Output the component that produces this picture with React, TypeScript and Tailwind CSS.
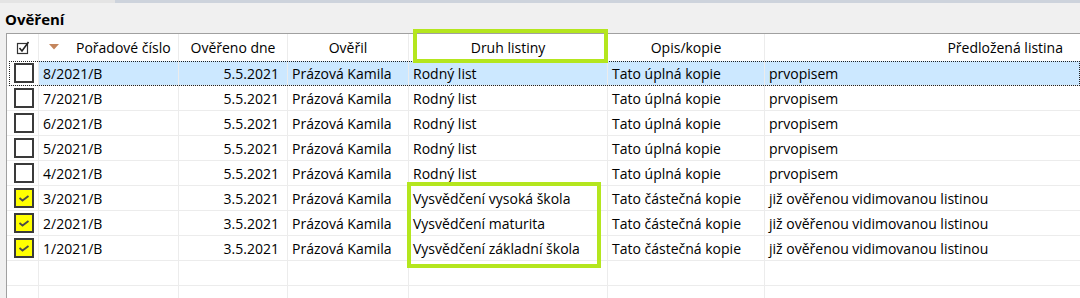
const rows = [
  { num: '8/2021/B', date: '5.5.2021', who: 'Prázová Kamila', kind: 'Rodný list', copy: 'Tato úplná kopie', doc: 'prvopisem', checked: false, selected: true },
  { num: '7/2021/B', date: '5.5.2021', who: 'Prázová Kamila', kind: 'Rodný list', copy: 'Tato úplná kopie', doc: 'prvopisem', checked: false },
  { num: '6/2021/B', date: '5.5.2021', who: 'Prázová Kamila', kind: 'Rodný list', copy: 'Tato úplná kopie', doc: 'prvopisem', checked: false },
  { num: '5/2021/B', date: '5.5.2021', who: 'Prázová Kamila', kind: 'Rodný list', copy: 'Tato úplná kopie', doc: 'prvopisem', checked: false },
  { num: '4/2021/B', date: '5.5.2021', who: 'Prázová Kamila', kind: 'Rodný list', copy: 'Tato úplná kopie', doc: 'prvopisem', checked: false },
  { num: '3/2021/B', date: '3.5.2021', who: 'Prázová Kamila', kind: 'Vysvědčení vysoká škola', copy: 'Tato částečná kopie', doc: 'již ověřenou vidimovanou listinou', checked: true },
  { num: '2/2021/B', date: '3.5.2021', who: 'Prázová Kamila', kind: 'Vysvědčení maturita', copy: 'Tato částečná kopie', doc: 'již ověřenou vidimovanou listinou', checked: true },
  { num: '1/2021/B', date: '3.5.2021', who: 'Prázová Kamila', kind: 'Vysvědčení základní škola', copy: 'Tato částečná kopie', doc: 'již ověřenou vidimovanou listinou', checked: true },
];

const cols = 'grid grid-cols-[32px_140px_109px_121px_199px_157px_1fr]';
const cell = 'border-r border-[#ececec] overflow-hidden whitespace-nowrap';

const Check = ({ checked }: { checked: boolean }) => (
  <div
    className={`flex h-[20px] w-[20px] items-center justify-center border-2 border-[#3a3a3a] ${
      checked ? 'bg-[#ffff00]' : 'bg-white'
    }`}
  >
    {checked && (
      <svg width="12" height="10" viewBox="0 0 12 10">
        <polyline points="1.5,5 4.5,7.5 10.5,3" fill="none" stroke="#4a4a4a" strokeWidth="1.8" />
      </svg>
    )}
  </div>
);

export default function App() {
  return (
    <div
      className="relative h-[298px] w-[1080px] overflow-hidden bg-[#f0f0f0] text-[14px] text-black"
      style={{ fontFamily: '"Open Sans", "Noto Sans", sans-serif' }}
    >
      <div className="flex h-[3px]">
        <div className="w-[115px] bg-[#e4e4e4]" />
        <div className="flex-1 bg-[#cdd3dc]" />
      </div>
      <div className="flex h-[30px] items-center pl-[5px] pt-[3px] text-[15px] font-bold">Ověření</div>

      <div className="ml-[6px] border-l border-t border-[#a0a0a0] bg-white">
        {/* header */}
        <div className={`${cols} h-[27px] items-stretch`}>
          <div className={`${cell} flex items-center pl-[9px]`}>
            <svg width="14" height="14" viewBox="0 0 14 14">
              <rect x="1.5" y="2.5" width="10" height="10" fill="white" stroke="#333" strokeWidth="1.2" />
              <polyline points="3.5,7 6,10 12.5,1" fill="none" stroke="#222" strokeWidth="1.6" />
            </svg>
          </div>
          <div className={`${cell} flex items-center pl-[10px]`}>
            <svg width="10" height="6" viewBox="0 0 10 6" className="mr-[17px] -mt-[2px]">
              <polygon points="0,0 10,0 5,5.5" fill="#c4855c" />
            </svg>
            <span>Pořadové číslo</span>
          </div>
          <div className={`${cell} flex items-center justify-center`}>Ověřeno dne</div>
          <div className={`${cell} flex items-center justify-center`}>Ověřil</div>
          <div className={`${cell} flex items-center justify-center`}>Druh listiny</div>
          <div className={`${cell} flex items-center justify-center`}>Opis/kopie</div>
          <div className="flex items-center justify-end pr-[17px]">Předložená listina</div>
        </div>

        {/* rows */}
        {rows.map((r) => {
          const bg = r.selected ? 'bg-[#cce8ff]' : '';
          return (
            <div key={r.num} className={`${cols} relative h-[25px] items-stretch border-b border-[#ececec]`}>
              <div className={`${cell} flex items-center pl-[7px]`}>
                <Check checked={r.checked} />
              </div>
              <div className={`${cell} ${bg} flex items-center pl-[4px]`}>{r.num}</div>
              <div className={`${cell} ${bg} flex items-center justify-end pr-[8px]`}>{r.date}</div>
              <div className={`${cell} ${bg} flex items-center pl-[4px]`}>{r.who}</div>
              <div className={`${cell} ${bg} flex items-center pl-[4px]`}>{r.kind}</div>
              <div className={`${cell} ${bg} flex items-center pl-[4px]`}>{r.copy}</div>
              <div className={`${bg} flex items-center pl-[4px] whitespace-nowrap`}>{r.doc}</div>
              {r.selected && (
                <div className="pointer-events-none absolute -bottom-px left-[2px] right-0 top-0 border border-dotted border-[#222]" />
              )}
            </div>
          );
        })}
        {[0, 1].map((i) => (
          <div key={i} className={`${cols} h-[25px] border-b border-[#ececec]`}>
            <div className={cell} />
            <div className={cell} />
            <div className={cell} />
            <div className={cell} />
            <div className={cell} />
            <div className={cell} />
            <div />
          </div>
        ))}
      </div>

      {/* highlight annotations */}
      <div className="pointer-events-none absolute left-[413px] top-[29px] h-[34px] w-[195px] border-[4px] border-[#b4e61e]" />
      <div className="pointer-events-none absolute left-[407px] top-[182px] h-[86px] w-[194px] border-[4px] border-[#b4e61e]" />
    </div>
  );
}
